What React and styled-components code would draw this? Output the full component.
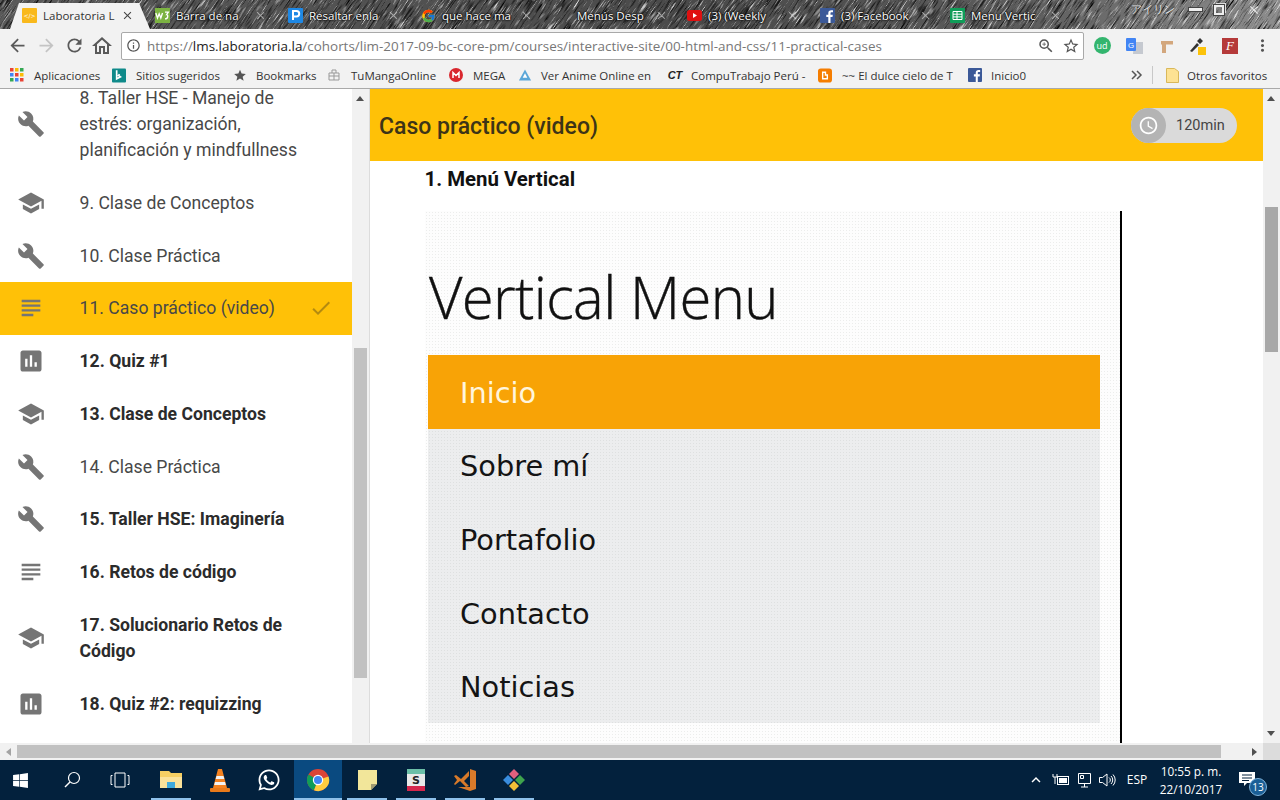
import React from 'react';
import styled, { createGlobalStyle, css } from 'styled-components';
import {
  MdArrowBack, MdArrowForward, MdRefresh, MdOutlineHome, MdInfoOutline, MdZoomIn, MdStarBorder, MdMoreVert,
  MdClose, MdBuild, MdSchool, MdSubject, MdAssessment, MdCheck, MdAccessTime, MdStar, MdKeyboardArrowUp,
} from 'react-icons/md';
import { FaWindows, FaWhatsapp } from 'react-icons/fa';
import { FcGoogle } from 'react-icons/fc';

const GlobalStyle = createGlobalStyle`
  html, body { margin: 0; padding: 0; background: #fff; }
  * { box-sizing: border-box; }
`;

const Screen = styled.div`
  width: 1280px;
  height: 800px;
  display: flex;
  flex-direction: column;
  overflow: hidden;
  font-family: "Open Sans", "Liberation Sans", sans-serif;
`;

/* ---------- tab strip ---------- */
const TabStrip = styled.div`
  position: relative;
  height: 29px;
  background: linear-gradient(90deg, #5a5a5a, #4a4a4a 55%, #5c5c5c 80%, #8e8e8e);
  display: flex;
  padding-left: 10px;
  overflow: hidden;
  flex: none;
`;

const Noise = styled.svg`
  position: absolute;
  inset: 0;
  width: 100%;
  height: 100%;
`;

const Tab = styled.div`
  position: relative;
  width: 133px;
  height: 29px;
  padding-left: 12px;
  display: flex;
  align-items: center;
  gap: 6px;
  font-size: 11.5px;
  color: ${p => (p.$active ? '#333' : '#fff')};
  ${p => p.$active && css`
    &::before {
      content: "";
      position: absolute;
      left: 0;
      top: 3px;
      width: 140px;
      height: 26px;
      background: #f2f2f2;
      clip-path: polygon(9px 0, 129px 0, 140px 100%, 0 100%);
    }
  `}
`;

const TabIcon = styled.span`
  position: relative;
  width: 15px;
  height: 15px;
  flex: none;
  display: flex;
  align-items: center;
  justify-content: center;
  margin-left: ${p => p.$offset || 0}px;
  margin-top: 2px;
`;

const TabTitle = styled.span`
  position: relative;
  width: 72px;
  white-space: nowrap;
  margin-top: 2px;
  text-shadow: ${p => (p.$active ? 'none' : '0 0 3px #000, 0 0 2px #000, 0 0 1px #000')};
`;

const TabClose = styled(MdClose)`
  position: relative;
  flex: none;
  margin-top: 2px;
  color: ${p => (p.$active ? '#444' : 'rgba(255,255,255,.5)')};
`;

const WindowButtons = styled.div`
  position: absolute;
  right: 19px;
  top: 1px;
  height: 17px;
  display: flex;
  align-items: center;
  gap: 12px;
  color: #e4e4e4;
  font-size: 10.5px;
  text-shadow: 0 0 2px #333;
`;

const WinName = styled.span`
  margin-right: 2px;
`;

const WinMin = styled.span`
  display: block;
  width: 13px;
  height: 3px;
  background: #eee;
  box-shadow: 0 0 0 1px #444;
`;

const WinRestore = styled.span`
  display: block;
  width: 10px;
  height: 10px;
  border: 2px solid #eee;
  box-shadow: 0 0 0 1px #444, 2px -2px 0 0 #ddd;
  margin-right: 11px;
`;

/* ---------- toolbar ---------- */
const Toolbar = styled.div`
  height: 33px;
  flex: none;
  background: #f2f2f2;
  display: flex;
  align-items: center;
  padding-left: 7px;
`;

const NavButton = styled.span`
  width: ${p => p.$w || 28}px;
  display: flex;
  justify-content: center;
  color: ${p => (p.$off ? '#c4c4c4' : '#5a5a5a')};
  font-size: 21px;
  line-height: 0;
`;

const Omnibox = styled.div`
  width: 963px;
  height: 28px;
  margin-left: 3px;
  background: #fff;
  border: 1px solid #a9a9a9;
  border-radius: 2px;
  display: flex;
  align-items: center;
  padding-left: 3px;
  font-size: 13.45px;
  color: #777;
  white-space: nowrap;
`;

const Url = styled.span`
  flex: 1;
  margin-left: 6px;
  b { font-weight: 400; color: #222; }
`;

const OmniIcon = styled.span`
  width: ${p => p.$w || 25}px;
  display: flex;
  justify-content: center;
  color: #555;
  font-size: 18px;
  line-height: 0;
`;

const Extensions = styled.div`
  flex: 1;
  display: flex;
  align-items: center;
  padding-left: 2px;
`;

const Ext = styled.span`
  width: 32px;
  display: flex;
  justify-content: center;
  line-height: 0;
`;

const UdBadge = styled.span`
  width: 17px;
  height: 17px;
  border-radius: 50%;
  background: #33b56e;
  color: #fff;
  font-size: 9px;
  line-height: 18px;
  text-align: center;
`;

const FontBadge = styled.span`
  width: 16px;
  height: 16px;
  background: #b53a3a;
  color: #fff;
  font: italic 13px/16px "Liberation Serif", serif;
  text-align: center;
`;

/* ---------- bookmarks ---------- */
const BookmarkBar = styled.div`
  height: 27px;
  flex: none;
  background: #f2f2f2;
  border-bottom: 1px solid #a9a9a9;
  display: flex;
  align-items: center;
  padding-left: 10px;
  font-size: 11.5px;
  color: #333;
  white-space: nowrap;
`;

const Bookmark = styled.span`
  width: ${p => p.$w}px;
  flex: none;
  display: flex;
  align-items: center;
  gap: ${p => p.$gap || 8}px;
`;

const BookmarkIcon = styled.span`
  width: ${p => p.$w || 14}px;
  height: 14px;
  flex: none;
  display: flex;
  align-items: center;
  justify-content: center;
  line-height: 0;
`;

const CtLogo = styled.span`
  font: italic 700 11px "Liberation Sans", sans-serif;
  color: #222;
`;

const Divider = styled.span`
  width: 1px;
  height: 18px;
  background: #c8c8c8;
  margin: 0 12px 0 5px;
`;

const More = styled.span`
  color: #555;
  line-height: 0;
  display: flex;
  width: 16px;
`;

/* ---------- page ---------- */
const Viewport = styled.div`
  flex: 1;
  min-height: 0;
  display: flex;
`;

const Sidebar = styled.aside`
  width: 352px;
  flex: none;
  overflow: hidden;
  background: #fff;
`;

const LessonList = styled.ul`
  list-style: none;
  margin: -17.4px 0 0;
  padding: 0;
`;

const Lesson = styled.li`
  display: flex;
  align-items: center;
  background: ${p => (p.$current ? '#ffc107' : 'transparent')};
  color: #424242;
`;

const LessonIcon = styled.span`
  width: 79.5px;
  flex: none;
  padding-left: 17px;
  display: flex;
  line-height: 0;
  color: #757575;
  font-size: 28px;
`;

const LessonText = styled.span`
  flex: 1;
  font-family: Roboto, sans-serif;
  font-size: 17.6px;
  line-height: 26px;
  font-weight: ${p => (p.$bold ? 700 : 400)};
  color: ${p => (p.$bold ? '#2b2b2b' : '#484848')};
  padding: 13.4px ${p => (p.$current ? 0 : 40)}px 13.4px 0;
`;

const Done = styled(MdCheck)`
  color: #b48a10;
  margin-right: 19px;
  flex: none;
`;

const VTrack = styled.div`
  position: relative;
  width: ${p => p.$w}px;
  flex: none;
  background: #f1f1f1;
  padding: ${p => p.$top}px 2px 0;
  border-right: ${p => (p.$edge ? '1px solid #dcdcdc' : 'none')};
`;

const VThumb = styled.div`
  height: ${p => p.$h}px;
  background: ${p => p.$c};
`;

const ArrowGlyph = styled.span`
  position: absolute;
  left: 4px;
  ${p => (p.$up ? 'top: 7px' : 'bottom: 7px')};
  width: 0;
  height: 0;
  border-left: 4px solid transparent;
  border-right: 4px solid transparent;
  ${p => (p.$up ? 'border-bottom: 5px solid #505050' : 'border-top: 5px solid #505050')};
`;

const Main = styled.main`
  flex: 1;
  min-width: 0;
  overflow: hidden;
  background: #fff;
`;

const LessonHeader = styled.header`
  height: 72px;
  background: #ffc107;
  display: flex;
  align-items: center;
  justify-content: space-between;
  padding: 0 26px 0 9px;
`;

const LessonTitle = styled.h1`
  margin: 2px 0 0;
  font: 500 23px Roboto, sans-serif;
  color: #3d3417;
`;

const Duration = styled.div`
  width: 106px;
  height: 35px;
  border-radius: 18px;
  background: #dadada;
  display: flex;
  align-items: center;
  font: 400 14.5px Roboto, sans-serif;
  color: #444;
`;

const ClockCircle = styled.span`
  width: 35px;
  height: 35px;
  border-radius: 50%;
  background: #b4b4b4;
  color: #fff;
  font-size: 21px;
  display: flex;
  align-items: center;
  justify-content: center;
  margin-right: 10px;
`;

const Content = styled.div`
  padding: 5px 0 0 54.5px;
`;

const SectionTitle = styled.h2`
  margin: 0;
  font: 700 20.4px/26px Roboto, sans-serif;
  color: #111;
`;

const dots = css`
  background-image:
    radial-gradient(rgba(150, 160, 150, .16) 0.7px, transparent 0.8px);
  background-size: 3px 3px;
`;

const Screenshot = styled.div`
  margin: 19px 0 0 .5px;
  width: 697px;
  height: 560px;
  border-right: 2px solid #000;
  background-color: #fdfdfd;
  ${dots}
  padding: 53px 20px 0 3px;
`;

const DemoHeading = styled.div`
  font-family: "Open Sans", sans-serif;
  font-weight: 300;
  font-size: 58px;
  line-height: 66px;
  color: #111;
  padding-left: 1px;
  letter-spacing: -.65px;
  -webkit-text-stroke: .4px #111;
`;

const DemoMenu = styled.ul`
  list-style: none;
  margin: 25px 0 0;
  padding: 0;
  background-color: #ecedee;
  ${dots}
`;

const DemoItem = styled.li`
  height: 73.6px;
  display: flex;
  align-items: center;
  padding: 2px 0 0 32px;
  font-family: "DejaVu Sans", sans-serif;
  font-size: 28.8px;
  color: ${p => (p.$active ? '#fff5dd' : '#141414')};
  background: ${p => (p.$active ? '#f8a306' : 'transparent')};
`;

const HBar = styled.div`
  height: 17px;
  flex: none;
  display: flex;
  background: #f1f1f1;
  align-items: center;
`;

const HArrow = styled.span`
  width: 17px;
  display: flex;
  justify-content: center;
  &::before {
    content: "";
    border-top: 4px solid transparent;
    border-bottom: 4px solid transparent;
    ${p => (p.$left ? 'border-right: 5px solid #a3a3a3' : 'border-left: 5px solid #505050')};
  }
`;

const HThumb = styled.div`
  width: 1204px;
  height: 13px;
  background: #c1c1c1;
  margin-right: 25px;
`;

const Corner = styled.div`
  width: 17px;
  height: 17px;
  background: #dcdcdc;
  margin-left: auto;
`;

/* ---------- taskbar ---------- */
const Taskbar = styled.footer`
  height: 40px;
  flex: none;
  background: #03213d;
  display: flex;
  align-items: stretch;
  color: #fff;
`;

const TaskSlot = styled.span`
  position: relative;
  width: 48px;
  margin-left: ${p => p.$ml || 0}px;
  padding-right: ${p => p.$pr || 0}px;
  display: flex;
  align-items: center;
  justify-content: center;
  background: ${p => (p.$active ? '#0a4a80' : 'transparent')};
  line-height: 0;
  ${p => p.$open && css`
    &::after {
      content: "";
      position: absolute;
      left: ${p.$active ? 0 : 4}px;
      right: ${p.$active ? 0 : 4}px;
      bottom: 0;
      height: 2px;
      background: #8fc1ea;
    }
  `}
`;

const Tray = styled.div`
  margin: 0 9px 0 auto;
  display: flex;
  align-items: center;
  font-size: 12px;
`;

const TrayIcon = styled.span`
  width: ${p => p.$w || 24}px;
  display: flex;
  justify-content: center;
  line-height: 0;
`;

const Clock = styled.div`
  width: 76px;
  text-align: center;
  font-size: 11.8px;
  line-height: 18px;
`;

const Notify = styled.span`
  position: relative;
  width: 42px;
  height: 40px;
  display: flex;
  align-items: center;
  justify-content: center;
  padding: 0 6px 3px 0;
`;

const Badge = styled.span`
  position: absolute;
  right: 4px;
  bottom: 4px;
  width: 18px;
  height: 18px;
  border-radius: 50%;
  background: #1b5f96;
  border: 1px solid #7fb4dc;
  font-size: 10px;
  line-height: 16px;
  text-align: center;
`;

const Sq = ({ c, children, r = 1, size = 15 }) => (
  <svg width={size} height={size} viewBox="0 0 15 15"><rect width="15" height="15" rx={r} fill={c} />{children}</svg>
);

const W3Icon = () => (
  <svg width="15" height="15" viewBox="0 0 18 18"><rect width="18" height="18" fill="#7cb342" /><path d="M1 6l2 6 2-5 2 5 2-6M12 5h4l-2 3c2 0 2 5-2 5" fill="none" stroke="#fff" strokeWidth="1.6" /></svg>
);
const PIcon = () => (
  <Sq c="#1e88e5"><path d="M5 12V3h3.500a2.600 2.600 0 010 5.400H5" fill="none" stroke="#fff" strokeWidth="2" /></Sq>
);
const YtIcon = () => (
  <svg width="15" height="11" viewBox="0 0 15 11"><rect width="15" height="11" rx="2.500" fill="#e01010" /><path d="M6 3l4 2.500L6 8z" fill="#fff" /></svg>
);
const FbIcon = ({ size = 15 }) => (
  <Sq c="#3b5998" size={size}><path d="M10.500 15V9h2l.3-2.300h-2.300V5.300c0-.7.2-1.100 1.100-1.100H13v-2h-1.800C9.500 2.200 8.300 3.200 8.300 5v1.700h-2V9h2v6z" fill="#fff" /></Sq>
);
const SheetIcon = () => (
  <Sq c="#0f9d58"><path d="M3 3.500h9v8H3zM3 6.200h9M3 8.900h9M7 3.500v8" fill="none" stroke="#fff" strokeWidth="1" /></Sq>
);
const LabIcon = () => (
  <Sq c="#f9b91c"><text x="7.500" y="10" fontSize="6" fontFamily="DejaVu Sans" fill="#fff" textAnchor="middle">&lt;/&gt;</text></Sq>
);

const tabs = [
  { title: 'Laboratoria L', icon: <LabIcon />, active: true },
  { title: 'Barra de na', icon: <W3Icon /> },
  { title: 'Resaltar enla', icon: <PIcon /> },
  { title: 'que hace ma', icon: <FcGoogle size={16} /> },
  { title: 'Menús Desp', icon: null, offset: 2 },
  { title: '(3) (Weekly', icon: <YtIcon /> },
  { title: '(3) Facebook', icon: <FbIcon /> },
  { title: 'Menu Vertic', icon: <SheetIcon />, offset: -3 },
];

const AppsGrid = () => {
  const colors = ['#ea4335', '#fbbc05', '#34a853', '#4285f4', '#ea4335', '#fbbc05', '#34a853', '#4285f4', '#ea4335'];
  return (
    <svg width="14" height="14" viewBox="0 0 14 14">
      {colors.map((c, i) => <rect key={i} x={(i % 3) * 5} y={Math.floor(i / 3) * 5} width="3.500" height="3.500" fill={c} />)}
    </svg>
  );
};

const bookmarks = [
  { label: 'Aplicaciones', w: 102, icon: <AppsGrid />, gap: 10 },
  { label: 'Sitios sugeridos', w: 121, icon: <Sq c="#0f8a8a"><path d="M5 2v9l4-2-2-1.500 1-1.500" fill="none" stroke="#fff" strokeWidth="1.800" /></Sq>, gap: 10 },
  { label: 'Bookmarks', w: 94, icon: <MdStar size={17} color="#555" />, gap: 9 },
  { label: 'TuMangaOnline', w: 122, icon: <svg width="14" height="14" viewBox="0 0 14 14"><path d="M2 5h10v7H2zM5 5V2h4v3M2 8h10M7 5v7" fill="none" stroke="#999" /></svg>, gap: 10 },
  { label: 'MEGA', w: 69, icon: <svg width="14" height="14" viewBox="0 0 14 14"><circle cx="7" cy="7" r="7" fill="#d9272e" /><path d="M4 10V4.500l3 3 3-3V10" fill="none" stroke="#fff" strokeWidth="1.500" /></svg>, gap: 10 },
  { label: 'Ver Anime Online en', w: 148, icon: <svg width="15" height="14" viewBox="0 0 15 14"><path d="M7.500 1L14 13H1z" fill="#5aa6d8" /><path d="M7.500 5l2.500 5H5z" fill="#fff" /></svg>, gap: 9 },
  { label: 'CompuTrabajo Perú -', w: 152, icon: <CtLogo>CT</CtLogo>, gap: 7, iw: 18 },
  { label: '~~ El dulce cielo de T', w: 150, icon: <Sq c="#f57d00" r={3}><path d="M5 4h3v3h2v4H5z" fill="none" stroke="#fff" strokeWidth="1.500" /></Sq>, gap: 10 },
  { label: 'Inicio0', w: 163, icon: <FbIcon size={14} />, gap: 9 },
];

const lessons = [
  { n: '8. Taller HSE - Manejo de estrés: organización, planificación y mindfullness', Icon: MdBuild },
  { n: '9. Clase de Conceptos', Icon: MdSchool },
  { n: '10. Clase Práctica', Icon: MdBuild },
  { n: '11. Caso práctico (video)', Icon: MdSubject, current: true },
  { n: '12. Quiz #1', Icon: MdAssessment, bold: true },
  { n: '13. Clase de Conceptos', Icon: MdSchool, bold: true },
  { n: '14. Clase Práctica', Icon: MdBuild },
  { n: '15. Taller HSE: Imaginería', Icon: MdBuild, bold: true },
  { n: '16. Retos de código', Icon: MdSubject, bold: true },
  { n: '17. Solucionario Retos de Código', Icon: MdSchool, bold: true },
  { n: '18. Quiz #2: requizzing', Icon: MdAssessment, bold: true },
];

const ChromeLogo = () => (
  <svg width="24" height="24" viewBox="0 0 24 24">
    <circle cx="12" cy="12" r="11" fill="#db4437" />
    <path d="M12 12L2.500 6.500A11 11 0 008 22.300z" fill="#0f9d58" />
    <path d="M12 12l10.500-3.500A11 11 0 018 22.300z" fill="#ffcd40" />
    <circle cx="12" cy="12" r="5.200" fill="#fff" />
    <circle cx="12" cy="12" r="4" fill="#4285f4" />
  </svg>
);

export default function App() {
  return (
    <Screen>
      <GlobalStyle />
      <TabStrip>
        <Noise aria-hidden="true">
          <filter id="streaks" x="0" y="0" width="100%" height="100%">
            <feTurbulence type="fractalNoise" baseFrequency="0.75 0.05" numOctaves="2" seed="7" />
            <feColorMatrix type="matrix" values="0 0 0 0 0  0 0 0 0 0  0 0 0 0 0  3 0 0 0 -1.500" />
          </filter>
          <filter id="streaksLight" x="0" y="0" width="100%" height="100%">
            <feTurbulence type="fractalNoise" baseFrequency="0.8 0.06" numOctaves="2" seed="21" />
            <feColorMatrix type="matrix" values="0 0 0 0 1  0 0 0 0 1  0 0 0 0 1  3 0 0 0 -1.650" />
          </filter>
          <g transform="rotate(35 640 15)">
            <rect x="-100" y="-700" width="1500" height="1400" filter="url(#streaks)" />
            <rect x="-100" y="-700" width="1500" height="1400" filter="url(#streaksLight)" />
          </g>
        </Noise>
        {tabs.map(t => (
          <Tab key={t.title} $active={t.active}>
            <TabIcon $offset={t.offset}>{t.icon}</TabIcon>
            <TabTitle $active={t.active}>{t.title}</TabTitle>
            <TabClose size={13} $active={t.active} />
          </Tab>
        ))}
        <WindowButtons>
          <WinName>アイリン</WinName>
          <WinMin />
          <WinRestore />
          <MdClose size={14} />
        </WindowButtons>
      </TabStrip>

      <Toolbar>
        <NavButton $w={21}><MdArrowBack /></NavButton>
        <NavButton $off $w={36}><MdArrowForward /></NavButton>
        <NavButton $w={21}><MdRefresh /></NavButton>
        <NavButton $w={33}><MdOutlineHome size={24} /></NavButton>
        <Omnibox>
          <OmniIcon $w={16}><MdInfoOutline size={15} /></OmniIcon>
          <Url>https://<b>lms.laboratoria.la</b>/cohorts/lim-2017-09-bc-core-pm/courses/interactive-site/00-html-and-css/11-practical-cases</Url>
          <OmniIcon><MdZoomIn /></OmniIcon>
          <OmniIcon><MdStarBorder /></OmniIcon>
        </Omnibox>
        <Extensions>
          <Ext><UdBadge>ud</UdBadge></Ext>
          <Ext>
            <svg width="17" height="16" viewBox="0 0 17 16"><path d="M8 4h9v12H7z" fill="#c5c9d0" /><rect width="10" height="13" rx="1" fill="#4285f4" /><text x="2" y="9.500" fontSize="8" fontFamily="Liberation Sans" fill="#fff">G</text></svg>
          </Ext>
          <Ext>
            <svg width="15" height="16" viewBox="0 0 15 16"><path d="M2 3h12v3.500H7V15H3V6.500H2z" fill="#d3a77d" /></svg>
          </Ext>
          <Ext>
            <svg width="18" height="18" viewBox="0 0 18 18"><path d="M1 14l7-8 2 2-7 7zM8 4l3-3 3 3-3 3z" fill="#333" /><rect x="9" y="10" width="8" height="8" fill="#fcc30b" /></svg>
          </Ext>
          <Ext><FontBadge>F</FontBadge></Ext>
          <Ext><MdMoreVert size={19} color="#555" /></Ext>
        </Extensions>
      </Toolbar>

      <BookmarkBar>
        {bookmarks.map(b => (
          <Bookmark key={b.label} $w={b.w} $gap={b.gap}>
            <BookmarkIcon $w={b.iw}>{b.icon}</BookmarkIcon>
            {b.label}
          </Bookmark>
        ))}
        <More>
          <svg width="12" height="10" viewBox="0 0 12 10"><path d="M1 1l4 4-4 4M6 1l4 4-4 4" fill="none" stroke="#555" strokeWidth="1.500" /></svg>
        </More>
        <Divider />
        <Bookmark $w={100} $gap={8}>
          <BookmarkIcon>
            <svg width="13" height="15" viewBox="0 0 13 15"><path d="M.5.5h8l4 3v11H.5z" fill="#fde293" stroke="#d9b85a" /></svg>
          </BookmarkIcon>
          Otros favoritos
        </Bookmark>
      </BookmarkBar>

      <Viewport>
        <Sidebar>
          <LessonList>
            {lessons.map(({ n, Icon, bold, current }) => (
              <Lesson key={n} $current={current}>
                <LessonIcon><Icon /></LessonIcon>
                <LessonText $bold={bold} $current={current}>{n}</LessonText>
                {current && <Done size={24} />}
              </Lesson>
            ))}
          </LessonList>
        </Sidebar>
        <VTrack $w={18} $top={259} $edge>
          <ArrowGlyph $up />
          <VThumb $h={330} $c="#c1c1c1" />
        </VTrack>
        <Main>
          <LessonHeader>
            <LessonTitle>Caso práctico (video)</LessonTitle>
            <Duration>
              <ClockCircle><MdAccessTime /></ClockCircle>
              120min
            </Duration>
          </LessonHeader>
          <Content>
            <SectionTitle>1. Menú Vertical</SectionTitle>
            <Screenshot>
              <DemoHeading>Vertical Menu</DemoHeading>
              <DemoMenu>
                <DemoItem $active>Inicio</DemoItem>
                <DemoItem>Sobre mí</DemoItem>
                <DemoItem>Portafolio</DemoItem>
                <DemoItem>Contacto</DemoItem>
                <DemoItem>Noticias</DemoItem>
              </DemoMenu>
            </Screenshot>
          </Content>
        </Main>
        <VTrack $w={17} $top={118}>
          <ArrowGlyph $up />
          <VThumb $h={145} $c="#a8a8a8" />
          <ArrowGlyph />
        </VTrack>
      </Viewport>

      <HBar>
        <HArrow $left />
        <HThumb />
        <HArrow />
        <Corner />
      </HBar>

      <Taskbar>
        <TaskSlot $pr={8}><FaWindows size={17} /></TaskSlot>
        <TaskSlot>
          <svg width="18" height="18" viewBox="0 0 18 18"><circle cx="11" cy="7" r="5.500" fill="none" stroke="#fff" strokeWidth="1.200" /><path d="M7 11l-5 5" stroke="#fff" strokeWidth="1.400" /></svg>
        </TaskSlot>
        <TaskSlot>
          <svg width="20" height="16" viewBox="0 0 20 16"><path d="M5 1h10v14H5zM2.500 3.500H1v9h1.500M17.500 3.500H19v9h-1.500" fill="none" stroke="#fff" /></svg>
        </TaskSlot>
        <TaskSlot $ml={3} $open>
          <svg width="22" height="20" viewBox="0 0 22 20"><path d="M0 1h9l2 2h11v15H0z" fill="#f6cf63" /><path d="M0 7h22v11H0z" fill="#fbe29a" /><rect x="7" y="12" width="8" height="6" fill="#3fa9dc" /></svg>
        </TaskSlot>
        <TaskSlot $ml={1}>
          <svg width="20" height="24" viewBox="0 0 20 24"><path d="M8 1h4l5 19H3z" fill="#f58220" /><path d="M6.500 8h7l.8 3H5.700zM5 14h10l.8 3H4.200z" fill="#f3f3f3" /><rect x="0" y="20" width="20" height="4" rx="1" fill="#e8791a" /></svg>
        </TaskSlot>
        <TaskSlot $ml={1}><FaWhatsapp size={24} /></TaskSlot>
        <TaskSlot $ml={1} $active $open><ChromeLogo /></TaskSlot>
        <TaskSlot $ml={1} $open>
          <svg width="19" height="20" viewBox="0 0 19 20"><path d="M0 0h19v14l-6 6H0z" fill="#f2e69a" /><path d="M13 20v-6h6z" fill="#a09a72" /></svg>
        </TaskSlot>
        <TaskSlot $ml={1} $open>
          <svg width="20" height="22" viewBox="0 0 20 22"><rect x="1" width="18" height="22" rx="1" fill="#e9e9e9" /><rect x="1" width="18" height="5" fill="#6bbfa8" /><rect x="1" y="17" width="18" height="5" fill="#d5264c" /><text x="10" y="15" fontSize="11" fontWeight="700" fontFamily="DejaVu Sans" fill="#222" textAnchor="middle">S</text></svg>
        </TaskSlot>
        <TaskSlot $ml={1} $open>
          <svg width="24" height="24" viewBox="0 0 24 24"><path d="M17 1l6 2v18l-6 2-12-4h12z" fill="#d87a2a" /><path d="M1 8l2-1 5 4 8-8v5l-5 5 5 5-3 1-6-6-5 4-1-1 3-4z" fill="#d87a2a" /></svg>
        </TaskSlot>
        <TaskSlot $ml={1} $open>
          <svg width="24" height="24" viewBox="0 0 24 24"><path d="M12 1l5 5-5 5-5-5z" fill="#e0607e" /><path d="M1 12l5-5 5 5-5 5z" fill="#3a8dde" /><path d="M23 12l-5-5-5 5 5 5z" fill="#3fa34d" /><path d="M12 13l5 5-5 5-5-5z" fill="#f2c037" /></svg>
        </TaskSlot>
        <Tray>
          <TrayIcon $w={18}><MdKeyboardArrowUp size={20} /></TrayIcon>
          <TrayIcon $w={30}>
            <svg width="17" height="14" viewBox="0 0 17 14"><rect x="5.500" y="3.500" width="11" height="8" fill="none" stroke="#fff" /><rect x="7" y="5" width="8" height="5" fill="#fff" /><path d="M1 1v3h4V1M3 4v7" fill="none" stroke="#fff" /></svg>
          </TrayIcon>
          <TrayIcon $w={18}>
            <svg width="17" height="16" viewBox="0 0 17 16"><path d="M2.500 1.500h12v10h-12zM8.500 11.500V15M5 15h7M4.500 3.500h3v3h-3z" fill="none" stroke="#fff" /></svg>
          </TrayIcon>
          <TrayIcon $w={28}>
            <svg width="18" height="16" viewBox="0 0 18 16"><path d="M1.500 5.500h3L9 2v12L4.500 10.500h-3zM11 5.500a3 3 0 010 5M13 4a5.500 5.500 0 010 8M15 2.500a8 8 0 010 11" fill="none" stroke="#fff" /></svg>
          </TrayIcon>
          <TrayIcon $w={32}>ESP</TrayIcon>
          <Clock>10:55 p. m.<br />22/10/2017</Clock>
          <Notify>
            <svg width="16" height="14" viewBox="0 0 16 14"><path d="M0 0h16v11H8l-3 3v-3H0z" fill="#fff" /><path d="M3 3h10M3 6h10M3 8.500h7" stroke="#03213d" /></svg>
            <Badge>13</Badge>
          </Notify>
        </Tray>
      </Taskbar>
    </Screen>
  );
}
